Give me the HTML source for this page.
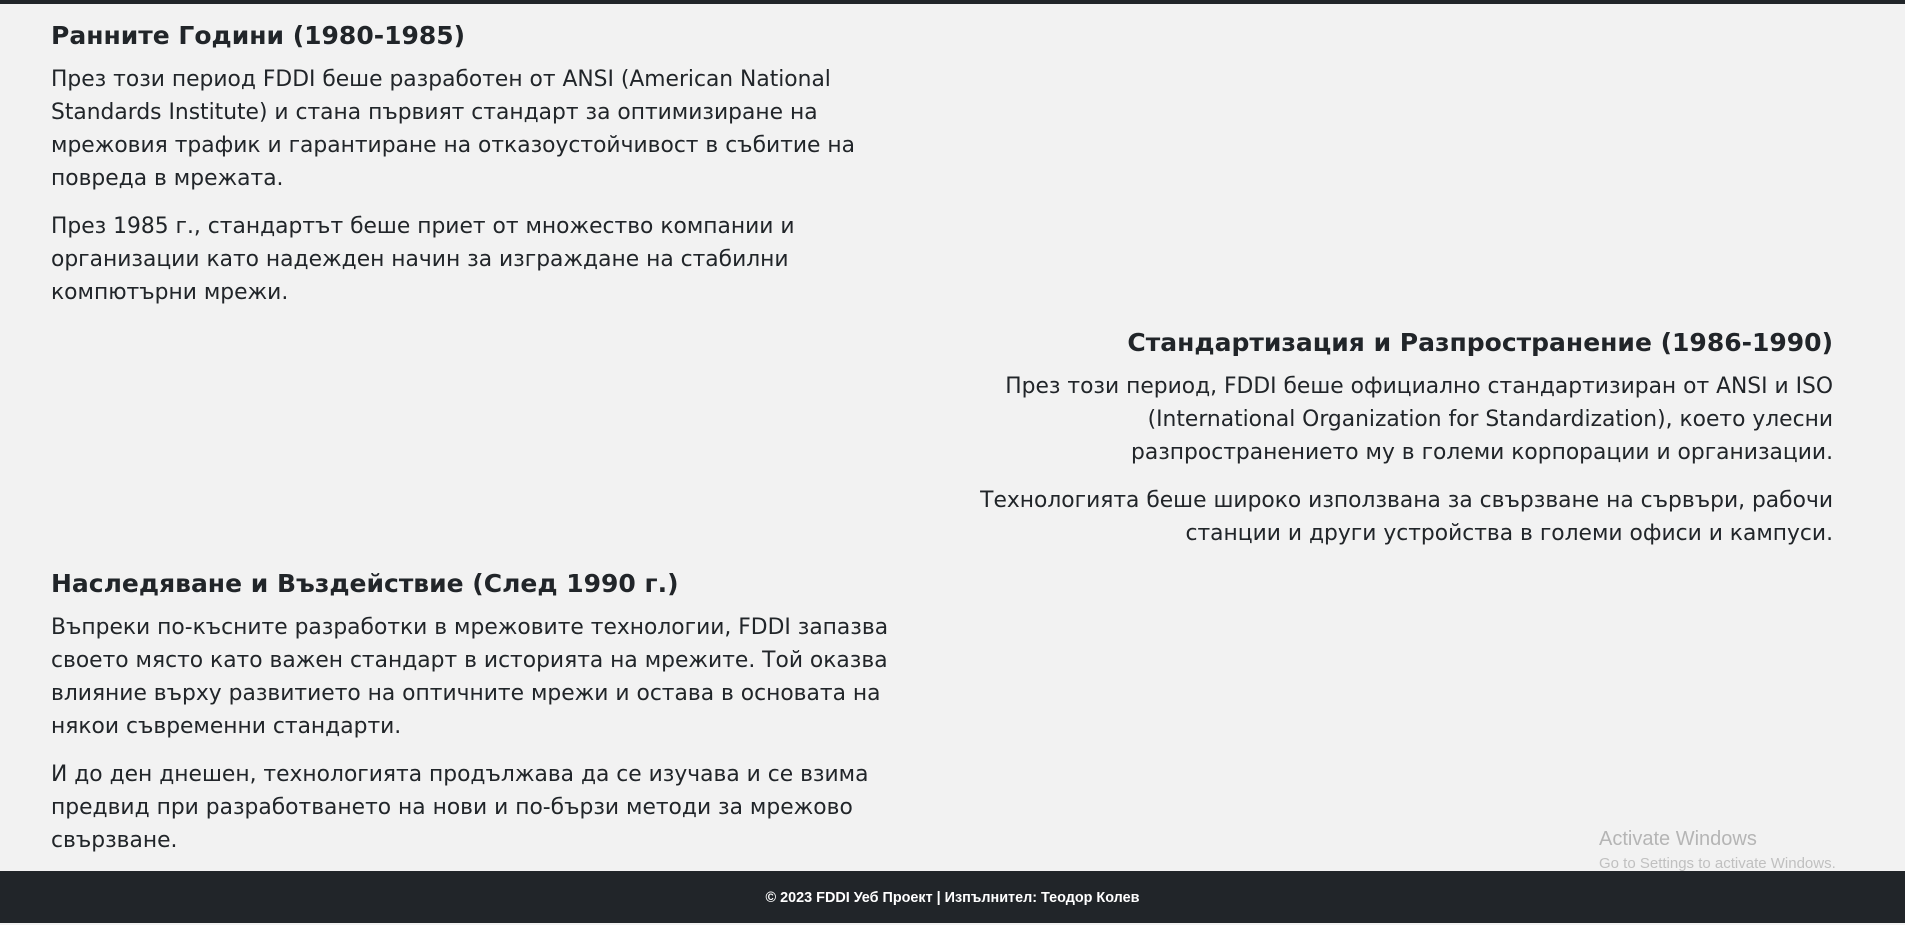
<!DOCTYPE html>
<html><head><meta charset="utf-8"><style>
html,body{margin:0;padding:0;width:1905px;height:923px;overflow:hidden;background:#f2f2f2;font-family:"DejaVu Sans","Liberation Sans",sans-serif;color:#212529}
.top{position:absolute;left:0;top:0;width:1905px;height:4px;background:#212529}
.b{position:absolute;white-space:nowrap}
h2{margin:0;font-size:25px;font-weight:bold;line-height:36px;height:36px}
p{margin:0;font-size:21.8px;line-height:33px}
p+p{margin-top:15px}
.l{left:51px}
.r{right:72px;text-align:right}
.foot{position:absolute;left:0;top:871px;width:1905px;height:52px;background:#212529;color:#fff;font:bold 14.4px "Liberation Sans",sans-serif;text-align:center;line-height:54px}
.act{position:absolute;left:1599px;top:828px;color:#b5b5b5;font-size:20px;font-family:"Liberation Sans",sans-serif}
.act2{position:absolute;left:1599px;top:855px;color:#c0c0c0;font-size:15px;font-family:"Liberation Sans",sans-serif}
</style></head><body>
<div class="top"></div>
<div class="b l" style="top:18px">
<h2>Ранните Години (1980-1985)</h2>
<p style="margin-top:9px">През този период FDDI беше разработен от ANSI (American National<br>Standards Institute) и стана първият стандарт за оптимизиране на<br>мрежовия трафик и гарантиране на отказоустойчивост в събитие на<br>повреда в мрежата.</p>
<p>През 1985 г., стандартът беше приет от множество компании и<br>организации като надежден начин за изграждане на стабилни<br>компютърни мрежи.</p>
</div>
<div class="b r" style="top:325px">
<h2>Стандартизация и Разпространение (1986-1990)</h2>
<p style="margin-top:9px">През този период, FDDI беше официално стандартизиран от ANSI и ISO<br>(International Organization for Standardization), което улесни<br>разпространението му в големи корпорации и организации.</p>
<p>Технологията беше широко използвана за свързване на сървъри, рабочи<br>станции и други устройства в големи офиси и кампуси.</p>
</div>
<div class="b l" style="top:566px">
<h2>Наследяване и Въздействие (След 1990 г.)</h2>
<p style="margin-top:9px">Въпреки по-късните разработки в мрежовите технологии, FDDI запазва<br>своето място като важен стандарт в историята на мрежите. Той оказва<br>влияние върху развитието на оптичните мрежи и остава в основата на<br>някои съвременни стандарти.</p>
<p>И до ден днешен, технологията продължава да се изучава и се взима<br>предвид при разработването на нови и по-бързи методи за мрежово<br>свързване.</p>
</div>
<div class="act">Activate Windows</div>
<div class="act2">Go to Settings to activate Windows.</div>
<div class="foot">© 2023 FDDI Уеб Проект | Изпълнител: Теодор Колев</div>
</body></html>
